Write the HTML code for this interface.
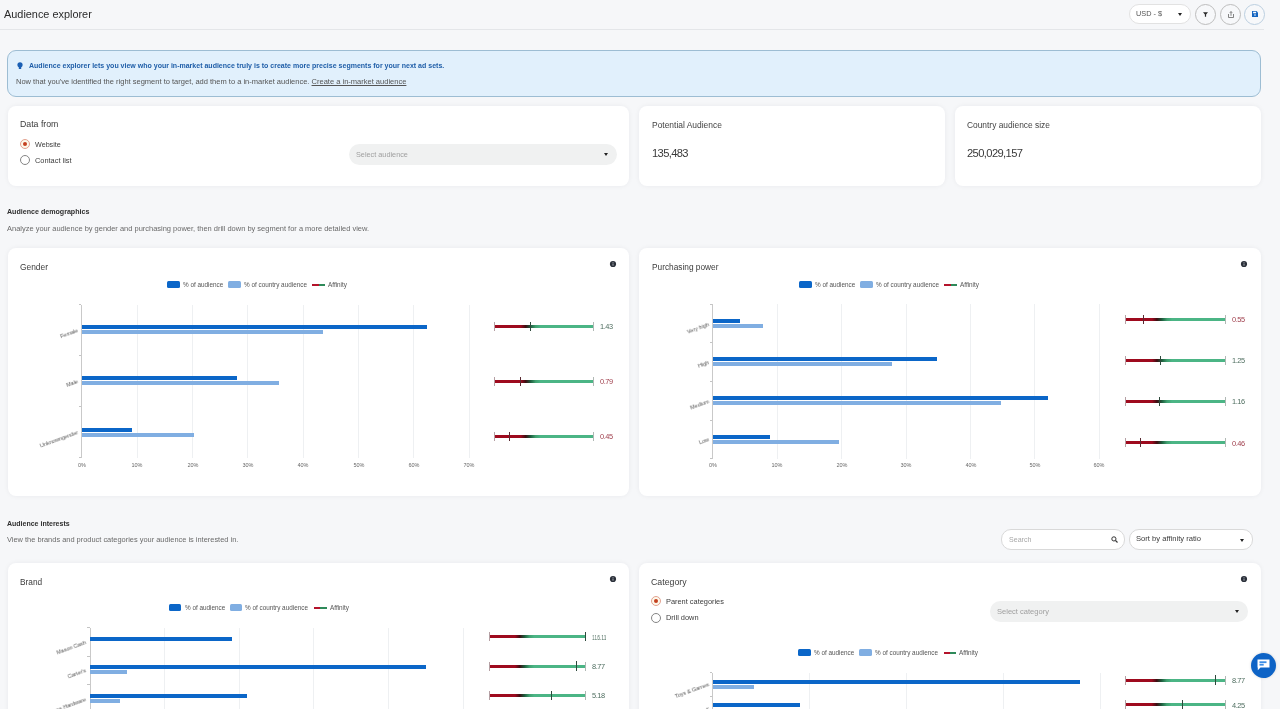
<!DOCTYPE html><html><head><meta charset="utf-8"><style>
*{margin:0;padding:0;box-sizing:border-box}
html,body{width:1280px;height:709px;overflow:hidden;background:#f6f7f9;font-family:"Liberation Sans", sans-serif}
.t{position:absolute;white-space:nowrap;line-height:1;will-change:transform}
.r{position:absolute}
.card{position:absolute;background:#fff;border-radius:8px;box-shadow:0 0 5px rgba(20,30,50,0.06)}
</style></head><body>
<div class="t" style="left:3.5px;top:8.57px;font-size:10.9px;color:#2b2b2b;font-weight:400;">Audience explorer</div>
<div class="r" style="left:0px;top:29px;width:1264px;height:1px;background:#e4e6e9;"></div>
<div class="r" style="left:1129px;top:4px;width:62px;height:20px;border:1px solid #e2e2e2;border-radius:10px;background:#fff"></div>
<div class="t" style="left:1136px;top:10.32px;font-size:7.3px;color:#555;font-weight:400;">USD - $</div>
<div class="r" style="left:1178px;top:12.5px;width:0;height:0;border-left:2.5px solid transparent;border-right:2.5px solid transparent;border-top:3px solid #222"></div>
<div class="r" style="left:1195.0px;top:3.5px;width:21px;height:21px;border:1px solid #bdbdbd;border-radius:50%;background:#f7f8fa"></div>
<div class="r" style="left:1220.0px;top:3.5px;width:21px;height:21px;border:1px solid #bdbdbd;border-radius:50%;background:#f7f8fa"></div>
<div class="r" style="left:1244.0px;top:3.5px;width:21px;height:21px;border:1px solid #bccfe0;border-radius:50%;background:#f7f8fa"></div>
<svg class="r" style="left:1203px;top:11.5px" width="5" height="5" viewBox="0 0 5 5"><path d="M0 0.2 H5 L3.1 2.4 V4.8 H1.9 V2.4 Z" fill="#2a2a2a"/></svg>
<svg class="r" style="left:1227.5px;top:10.5px" width="6" height="7" viewBox="0 0 6 7"><path d="M0.5 3 V6.5 H5.5 V3" fill="none" stroke="#666" stroke-width="0.8"/><path d="M3 4.8 V0.6 M1.8 1.8 L3 0.6 L4.2 1.8" fill="none" stroke="#666" stroke-width="0.8"/></svg>
<svg class="r" style="left:1251.5px;top:11px" width="6" height="6" viewBox="0 0 8 8"><path d="M0 0 H6 L8 2 V8 H0 Z" fill="#1565c0"/><rect x="1.5" y="1" width="4" height="2" fill="#fff"/><circle cx="4" cy="5.3" r="1.1" fill="#fff"/></svg>
<div class="r" style="left:7px;top:50px;width:1254px;height:46.5px;background:#e1f0fc;border:1px solid #9dbdd3;border-radius:9px"></div>
<svg class="r" style="left:17px;top:62px" width="6" height="8" viewBox="0 0 6 8"><circle cx="3" cy="2.8" r="2.6" fill="#1a5fb4"/><rect x="1.8" y="5" width="2.4" height="2" fill="#1a5fb4"/></svg>
<div class="t" style="left:29px;top:62.25px;font-size:7.03px;color:#1f5ea8;font-weight:700;">Audience explorer lets you view who your in-market audience truly is to create more precise segments for your next ad sets.</div>
<div class="t" style="left:16px;top:78.43px;font-size:7.53px;color:#555;font-weight:400;">Now that you&#39;ve identified the right segment to target, add them to a in-market audience. <span style="text-decoration:underline">Create a in-market audience</span></div>
<div class="card" style="left:8px;top:106px;width:621px;height:79.5px"></div>
<div class="card" style="left:639px;top:106px;width:306px;height:79.5px"></div>
<div class="card" style="left:955px;top:106px;width:305.5px;height:79.5px"></div>
<div class="t" style="left:20px;top:119.89px;font-size:8.75px;color:#3c3c3c;font-weight:400;">Data from</div>
<div class="r" style="left:20px;top:138.8px;width:10px;height:10px;border:1px solid #e3a290;border-radius:50%;background:#fdf8ea"></div>
<div class="r" style="left:23px;top:141.8px;width:4px;height:4px;border-radius:50%;background:#c4401f"></div>
<div class="r" style="left:20px;top:155.3px;width:10px;height:10px;border:1px solid #858585;border-radius:50%;background:#fff"></div>
<div class="t" style="left:34.5px;top:141.92px;font-size:7.18px;color:#3c3c3c;font-weight:400;">Website</div>
<div class="t" style="left:34.5px;top:157.04px;font-size:7.4px;color:#3c3c3c;font-weight:400;">Contact list</div>
<div class="r" style="left:348.5px;top:144.2px;width:268.5px;height:20.8px;background:#f0f1f1;border-radius:10.4px"></div>
<div class="t" style="left:355.5px;top:150.91px;font-size:7.31px;color:#a0a0a0;font-weight:400;">Select audience</div>
<div class="r" style="left:603.5px;top:153px;width:0;height:0;border-left:2.5px solid transparent;border-right:2.5px solid transparent;border-top:3px solid #222"></div>
<div class="t" style="left:651.6px;top:120.75px;font-size:8.45px;color:#444;font-weight:400;">Potential Audience</div>
<div class="t" style="left:651.6px;top:147.82px;font-size:11.2px;color:#3a3a3a;font-weight:400;letter-spacing:-0.65px">135,483</div>
<div class="t" style="left:966.8px;top:120.80px;font-size:8.39px;color:#444;font-weight:400;">Country audience size</div>
<div class="t" style="left:966.8px;top:147.82px;font-size:11.2px;color:#3a3a3a;font-weight:400;letter-spacing:-0.62px">250,029,157</div>
<div class="t" style="left:7.3px;top:209.19px;font-size:7.1px;color:#2f2f2f;font-weight:700;">Audience demographics</div>
<div class="t" style="left:7.3px;top:225.07px;font-size:7.48px;color:#6a6a6a;font-weight:400;">Analyze your audience by gender and purchasing power, then drill down by segment for a more detailed view.</div>
<div class="card" style="left:8px;top:248px;width:621px;height:247.5px"></div>
<div class="t" style="left:19.7px;top:262.80px;font-size:8.39px;color:#3c3c3c;font-weight:400;">Gender</div>
<svg class="r" style="left:608.8px;top:260.1px" width="8" height="8" viewBox="0 0 8 8"><circle cx="4" cy="4" r="3.1" fill="#2b303a"/><rect x="3.6" y="3.5" width="0.8" height="2.2" fill="#c3c7ce"/><rect x="3.6" y="2.2" width="0.8" height="0.8" fill="#c3c7ce"/></svg>
<div class="r" style="left:167px;top:281.3px;width:12.8px;height:6.3px;background:#0b66c8;border-radius:1.5px"></div>
<div class="t" style="left:183px;top:281.51px;font-size:6.37px;color:#555;font-weight:400;">% of audience</div>
<div class="r" style="left:228px;top:281.3px;width:12.8px;height:6.3px;background:#80aee2;border-radius:1.5px"></div>
<div class="t" style="left:243.6px;top:281.51px;font-size:6.37px;color:#555;font-weight:400;">% of country audience</div>
<div class="r" style="left:312.3px;top:283.6px;width:6.3px;height:2px;background:#b4132b;"></div>
<div class="r" style="left:318.6px;top:283.6px;width:6.3px;height:2px;background:#2f8a5a;"></div>
<div class="t" style="left:328px;top:281.51px;font-size:6.37px;color:#555;font-weight:400;">Affinity</div>
<div class="r" style="left:136.65px;top:304.6px;width:1px;height:153.29999999999995px;background:#eef0f2;"></div>
<div class="r" style="left:192.0px;top:304.6px;width:1px;height:153.29999999999995px;background:#eef0f2;"></div>
<div class="r" style="left:247.35000000000002px;top:304.6px;width:1px;height:153.29999999999995px;background:#eef0f2;"></div>
<div class="r" style="left:302.7px;top:304.6px;width:1px;height:153.29999999999995px;background:#eef0f2;"></div>
<div class="r" style="left:358.05px;top:304.6px;width:1px;height:153.29999999999995px;background:#eef0f2;"></div>
<div class="r" style="left:413.40000000000003px;top:304.6px;width:1px;height:153.29999999999995px;background:#eef0f2;"></div>
<div class="r" style="left:468.75px;top:304.6px;width:1px;height:153.29999999999995px;background:#eef0f2;"></div>
<div class="r" style="left:81.3px;top:304.6px;width:1px;height:153.79999999999995px;background:#c9c9c9;"></div>
<div class="r" style="left:78.8px;top:304.1px;width:2.5px;height:1px;background:#c4c4c4;"></div>
<div class="r" style="left:78.8px;top:355.2px;width:2.5px;height:1px;background:#c4c4c4;"></div>
<div class="r" style="left:78.8px;top:406.3px;width:2.5px;height:1px;background:#c4c4c4;"></div>
<div class="r" style="left:78.8px;top:457.4px;width:2.5px;height:1px;background:#c4c4c4;"></div>
<div class="r" style="left:81.8px;top:325px;width:345.7px;height:4px;background:#0b66c8;"></div>
<div class="r" style="left:81.8px;top:330px;width:241.7px;height:4px;background:#80aee2;"></div>
<div class="t" style="left:77.8px;top:328.15000000000003px;font-size:5.5px;color:#555;transform:translateX(-100%) rotate(-20deg);transform-origin:100% 50%">Female</div>
<div class="r" style="left:81.8px;top:376px;width:155.5px;height:4px;background:#0b66c8;"></div>
<div class="r" style="left:81.8px;top:381px;width:197.7px;height:4px;background:#80aee2;"></div>
<div class="t" style="left:77.8px;top:379.25px;font-size:5.5px;color:#555;transform:translateX(-100%) rotate(-20deg);transform-origin:100% 50%">Male</div>
<div class="r" style="left:81.8px;top:428px;width:50.39999999999999px;height:4px;background:#0b66c8;"></div>
<div class="r" style="left:81.8px;top:433px;width:112.00000000000001px;height:4px;background:#80aee2;"></div>
<div class="t" style="left:77.8px;top:430.35px;font-size:5.5px;color:#555;transform:translateX(-100%) rotate(-20deg);transform-origin:100% 50%">Unknowngender</div>
<div class="t" style="left:81.8px;top:463.2px;font-size:5.5px;color:#666;transform:translateX(-50%)">0%</div>
<div class="t" style="left:137.15px;top:463.2px;font-size:5.5px;color:#666;transform:translateX(-50%)">10%</div>
<div class="t" style="left:192.5px;top:463.2px;font-size:5.5px;color:#666;transform:translateX(-50%)">20%</div>
<div class="t" style="left:247.85000000000002px;top:463.2px;font-size:5.5px;color:#666;transform:translateX(-50%)">30%</div>
<div class="t" style="left:303.2px;top:463.2px;font-size:5.5px;color:#666;transform:translateX(-50%)">40%</div>
<div class="t" style="left:358.55px;top:463.2px;font-size:5.5px;color:#666;transform:translateX(-50%)">50%</div>
<div class="t" style="left:413.90000000000003px;top:463.2px;font-size:5.5px;color:#666;transform:translateX(-50%)">60%</div>
<div class="t" style="left:469.25px;top:463.2px;font-size:5.5px;color:#666;transform:translateX(-50%)">70%</div>
<div class="r" style="left:494.6px;top:325px;width:99.19999999999993px;height:3px;background:linear-gradient(90deg,#a00a1e 0%,#9c0a1e 26%,#3c0e12 31%,#1d5e3e 36%,#3fa070 41%,#4bb585 46%,#4bb585 100%)"></div>
<div class="r" style="left:494.1px;top:321.7px;width:1px;height:9px;background:#b5a0a4;"></div>
<div class="r" style="left:593.3px;top:321.7px;width:1px;height:9px;background:#b0b8b4;"></div>
<div class="r" style="left:529.9px;top:321.5px;width:1.1px;height:9.4px;background:#2e4a3c;"></div>
<div class="t" style="left:600.4px;top:323.04px;font-size:7.4px;color:#4f6e60;font-weight:400;letter-spacing:-0.45px">1.43</div>
<div class="r" style="left:494.6px;top:380px;width:99.19999999999993px;height:3px;background:linear-gradient(90deg,#a00a1e 0%,#9c0a1e 26%,#3c0e12 31%,#1d5e3e 36%,#3fa070 41%,#4bb585 46%,#4bb585 100%)"></div>
<div class="r" style="left:494.1px;top:376.8px;width:1px;height:9px;background:#b5a0a4;"></div>
<div class="r" style="left:593.3px;top:376.8px;width:1px;height:9px;background:#b0b8b4;"></div>
<div class="r" style="left:520.1px;top:376.6px;width:1.1px;height:9.4px;background:#5a2a32;"></div>
<div class="t" style="left:600.4px;top:378.14px;font-size:7.4px;color:#a0404e;font-weight:400;letter-spacing:-0.45px">0.79</div>
<div class="r" style="left:494.6px;top:435px;width:99.19999999999993px;height:3px;background:linear-gradient(90deg,#a00a1e 0%,#9c0a1e 26%,#3c0e12 31%,#1d5e3e 36%,#3fa070 41%,#4bb585 46%,#4bb585 100%)"></div>
<div class="r" style="left:494.1px;top:431.7px;width:1px;height:9px;background:#b5a0a4;"></div>
<div class="r" style="left:593.3px;top:431.7px;width:1px;height:9px;background:#b0b8b4;"></div>
<div class="r" style="left:508.7px;top:431.5px;width:1.1px;height:9.4px;background:#5a2a32;"></div>
<div class="t" style="left:600.4px;top:433.04px;font-size:7.4px;color:#a0404e;font-weight:400;letter-spacing:-0.45px">0.45</div>
<div class="card" style="left:639px;top:248px;width:621.5px;height:247.5px"></div>
<div class="t" style="left:651.6px;top:262.67px;font-size:8.3px;color:#3c3c3c;font-weight:400;">Purchasing power</div>
<svg class="r" style="left:1240px;top:260.1px" width="8" height="8" viewBox="0 0 8 8"><circle cx="4" cy="4" r="3.1" fill="#2b303a"/><rect x="3.6" y="3.5" width="0.8" height="2.2" fill="#c3c7ce"/><rect x="3.6" y="2.2" width="0.8" height="0.8" fill="#c3c7ce"/></svg>
<div class="r" style="left:799px;top:281.3px;width:12.8px;height:6.3px;background:#0b66c8;border-radius:1.5px"></div>
<div class="t" style="left:815px;top:281.51px;font-size:6.37px;color:#555;font-weight:400;">% of audience</div>
<div class="r" style="left:860px;top:281.3px;width:12.8px;height:6.3px;background:#80aee2;border-radius:1.5px"></div>
<div class="t" style="left:875.6px;top:281.51px;font-size:6.37px;color:#555;font-weight:400;">% of country audience</div>
<div class="r" style="left:944.3px;top:283.6px;width:6.3px;height:2px;background:#b4132b;"></div>
<div class="r" style="left:950.6px;top:283.6px;width:6.3px;height:2px;background:#2f8a5a;"></div>
<div class="t" style="left:960px;top:281.51px;font-size:6.37px;color:#555;font-weight:400;">Affinity</div>
<div class="r" style="left:776.73px;top:304.3px;width:1px;height:154.3px;background:#eef0f2;"></div>
<div class="r" style="left:841.16px;top:304.3px;width:1px;height:154.3px;background:#eef0f2;"></div>
<div class="r" style="left:905.5899999999999px;top:304.3px;width:1px;height:154.3px;background:#eef0f2;"></div>
<div class="r" style="left:970.02px;top:304.3px;width:1px;height:154.3px;background:#eef0f2;"></div>
<div class="r" style="left:1034.45px;top:304.3px;width:1px;height:154.3px;background:#eef0f2;"></div>
<div class="r" style="left:1098.88px;top:304.3px;width:1px;height:154.3px;background:#eef0f2;"></div>
<div class="r" style="left:712.3px;top:304.3px;width:1px;height:154.8px;background:#c9c9c9;"></div>
<div class="r" style="left:709.8px;top:303.8px;width:2.5px;height:1px;background:#c4c4c4;"></div>
<div class="r" style="left:709.8px;top:342.375px;width:2.5px;height:1px;background:#c4c4c4;"></div>
<div class="r" style="left:709.8px;top:380.95000000000005px;width:2.5px;height:1px;background:#c4c4c4;"></div>
<div class="r" style="left:709.8px;top:419.52500000000003px;width:2.5px;height:1px;background:#c4c4c4;"></div>
<div class="r" style="left:709.8px;top:458.1px;width:2.5px;height:1px;background:#c4c4c4;"></div>
<div class="r" style="left:712.8px;top:319px;width:27.300000000000068px;height:4px;background:#0b66c8;"></div>
<div class="r" style="left:712.8px;top:324px;width:50.200000000000045px;height:4px;background:#80aee2;"></div>
<div class="t" style="left:708.8px;top:321.58750000000003px;font-size:5.5px;color:#555;transform:translateX(-100%) rotate(-20deg);transform-origin:100% 50%">Very high</div>
<div class="r" style="left:712.8px;top:357px;width:224.20000000000005px;height:4px;background:#0b66c8;"></div>
<div class="r" style="left:712.8px;top:362px;width:179.60000000000002px;height:4px;background:#80aee2;"></div>
<div class="t" style="left:708.8px;top:360.1625px;font-size:5.5px;color:#555;transform:translateX(-100%) rotate(-20deg);transform-origin:100% 50%">High</div>
<div class="r" style="left:712.8px;top:396px;width:335.4000000000001px;height:4px;background:#0b66c8;"></div>
<div class="r" style="left:712.8px;top:401px;width:288.20000000000005px;height:4px;background:#80aee2;"></div>
<div class="t" style="left:708.8px;top:398.7375px;font-size:5.5px;color:#555;transform:translateX(-100%) rotate(-20deg);transform-origin:100% 50%">Medium</div>
<div class="r" style="left:712.8px;top:435px;width:57.200000000000045px;height:4px;background:#0b66c8;"></div>
<div class="r" style="left:712.8px;top:440px;width:126.0px;height:4px;background:#80aee2;"></div>
<div class="t" style="left:708.8px;top:437.3125px;font-size:5.5px;color:#555;transform:translateX(-100%) rotate(-20deg);transform-origin:100% 50%">Low</div>
<div class="t" style="left:712.8px;top:463px;font-size:5.5px;color:#666;transform:translateX(-50%)">0%</div>
<div class="t" style="left:777.23px;top:463px;font-size:5.5px;color:#666;transform:translateX(-50%)">10%</div>
<div class="t" style="left:841.66px;top:463px;font-size:5.5px;color:#666;transform:translateX(-50%)">20%</div>
<div class="t" style="left:906.0899999999999px;top:463px;font-size:5.5px;color:#666;transform:translateX(-50%)">30%</div>
<div class="t" style="left:970.52px;top:463px;font-size:5.5px;color:#666;transform:translateX(-50%)">40%</div>
<div class="t" style="left:1034.95px;top:463px;font-size:5.5px;color:#666;transform:translateX(-50%)">50%</div>
<div class="t" style="left:1099.38px;top:463px;font-size:5.5px;color:#666;transform:translateX(-50%)">60%</div>
<div class="r" style="left:1125.8px;top:318px;width:99.79999999999995px;height:3px;background:linear-gradient(90deg,#a00a1e 0%,#9c0a1e 26%,#3c0e12 31%,#1d5e3e 36%,#3fa070 41%,#4bb585 46%,#4bb585 100%)"></div>
<div class="r" style="left:1125.3px;top:315.1px;width:1px;height:9px;background:#b5a0a4;"></div>
<div class="r" style="left:1225.1px;top:315.1px;width:1px;height:9px;background:#b0b8b4;"></div>
<div class="r" style="left:1143.4px;top:314.90000000000003px;width:1.1px;height:9.4px;background:#5a2a32;"></div>
<div class="t" style="left:1232.1999999999998px;top:316.44px;font-size:7.4px;color:#a0404e;font-weight:400;letter-spacing:-0.45px">0.55</div>
<div class="r" style="left:1125.8px;top:359px;width:99.79999999999995px;height:3px;background:linear-gradient(90deg,#a00a1e 0%,#9c0a1e 26%,#3c0e12 31%,#1d5e3e 36%,#3fa070 41%,#4bb585 46%,#4bb585 100%)"></div>
<div class="r" style="left:1125.3px;top:356.0px;width:1px;height:9px;background:#b5a0a4;"></div>
<div class="r" style="left:1225.1px;top:356.0px;width:1px;height:9px;background:#b0b8b4;"></div>
<div class="r" style="left:1160.3px;top:355.8px;width:1.1px;height:9.4px;background:#2e4a3c;"></div>
<div class="t" style="left:1232.1999999999998px;top:357.34px;font-size:7.4px;color:#4f6e60;font-weight:400;letter-spacing:-0.45px">1.25</div>
<div class="r" style="left:1125.8px;top:400px;width:99.79999999999995px;height:3px;background:linear-gradient(90deg,#a00a1e 0%,#9c0a1e 26%,#3c0e12 31%,#1d5e3e 36%,#3fa070 41%,#4bb585 46%,#4bb585 100%)"></div>
<div class="r" style="left:1125.3px;top:397.1px;width:1px;height:9px;background:#b5a0a4;"></div>
<div class="r" style="left:1225.1px;top:397.1px;width:1px;height:9px;background:#b0b8b4;"></div>
<div class="r" style="left:1159.2px;top:396.90000000000003px;width:1.1px;height:9.4px;background:#2e4a3c;"></div>
<div class="t" style="left:1232.1999999999998px;top:398.44px;font-size:7.4px;color:#4f6e60;font-weight:400;letter-spacing:-0.45px">1.16</div>
<div class="r" style="left:1125.8px;top:441px;width:99.79999999999995px;height:3px;background:linear-gradient(90deg,#a00a1e 0%,#9c0a1e 26%,#3c0e12 31%,#1d5e3e 36%,#3fa070 41%,#4bb585 46%,#4bb585 100%)"></div>
<div class="r" style="left:1125.3px;top:438.2px;width:1px;height:9px;background:#b5a0a4;"></div>
<div class="r" style="left:1225.1px;top:438.2px;width:1px;height:9px;background:#b0b8b4;"></div>
<div class="r" style="left:1140.4px;top:438.0px;width:1.1px;height:9.4px;background:#5a2a32;"></div>
<div class="t" style="left:1232.1999999999998px;top:439.54px;font-size:7.4px;color:#a0404e;font-weight:400;letter-spacing:-0.45px">0.46</div>
<div class="t" style="left:7.3px;top:519.87px;font-size:7.01px;color:#2f2f2f;font-weight:700;">Audience interests</div>
<div class="t" style="left:7.3px;top:535.61px;font-size:7.43px;color:#6a6a6a;font-weight:400;">View the brands and product categories your audience is interested in.</div>
<div class="r" style="left:1001px;top:529px;width:124px;height:20.5px;border:1px solid #d9d9d9;border-radius:10px;background:#fff"></div>
<div class="t" style="left:1008.6px;top:536.02px;font-size:7.07px;color:#a8a8a8;font-weight:400;">Search</div>
<svg class="r" style="left:1110.5px;top:535.5px" width="7" height="7" viewBox="0 0 7 7"><circle cx="2.9" cy="2.9" r="2.1" fill="none" stroke="#333" stroke-width="1"/><path d="M4.5 4.5 L6.5 6.5" stroke="#333" stroke-width="1.1"/></svg>
<div class="r" style="left:1129px;top:529px;width:124px;height:20.5px;border:1px solid #d9d9d9;border-radius:10px;background:#fff"></div>
<div class="t" style="left:1136.2px;top:535.36px;font-size:7.61px;color:#3c3c3c;font-weight:400;">Sort by affinity ratio</div>
<div class="r" style="left:1239.5px;top:538.5px;width:0;height:0;border-left:2.5px solid transparent;border-right:2.5px solid transparent;border-top:3px solid #222"></div>
<div class="card" style="left:8px;top:562.5px;width:621px;height:160px"></div>
<div class="t" style="left:20px;top:578.16px;font-size:8.32px;color:#3c3c3c;font-weight:400;">Brand</div>
<svg class="r" style="left:608.7px;top:575.3px" width="8" height="8" viewBox="0 0 8 8"><circle cx="4" cy="4" r="3.1" fill="#2b303a"/><rect x="3.6" y="3.5" width="0.8" height="2.2" fill="#c3c7ce"/><rect x="3.6" y="2.2" width="0.8" height="0.8" fill="#c3c7ce"/></svg>
<div class="r" style="left:168.7px;top:604.4px;width:12.8px;height:6.3px;background:#0b66c8;border-radius:1.5px"></div>
<div class="t" style="left:184.7px;top:604.61px;font-size:6.37px;color:#555;font-weight:400;">% of audience</div>
<div class="r" style="left:229.7px;top:604.4px;width:12.8px;height:6.3px;background:#80aee2;border-radius:1.5px"></div>
<div class="t" style="left:245.29999999999998px;top:604.61px;font-size:6.37px;color:#555;font-weight:400;">% of country audience</div>
<div class="r" style="left:314.0px;top:606.7px;width:6.3px;height:2px;background:#b4132b;"></div>
<div class="r" style="left:320.29999999999995px;top:606.7px;width:6.3px;height:2px;background:#2f8a5a;"></div>
<div class="t" style="left:329.7px;top:604.61px;font-size:6.37px;color:#555;font-weight:400;">Affinity</div>
<div class="r" style="left:164.1px;top:627.5px;width:1px;height:114.0px;background:#eef0f2;"></div>
<div class="r" style="left:238.7px;top:627.5px;width:1px;height:114.0px;background:#eef0f2;"></div>
<div class="r" style="left:313.29999999999995px;top:627.5px;width:1px;height:114.0px;background:#eef0f2;"></div>
<div class="r" style="left:387.9px;top:627.5px;width:1px;height:114.0px;background:#eef0f2;"></div>
<div class="r" style="left:462.5px;top:627.5px;width:1px;height:114.0px;background:#eef0f2;"></div>
<div class="r" style="left:89.5px;top:627.5px;width:1px;height:114.5px;background:#c9c9c9;"></div>
<div class="r" style="left:87px;top:627.0px;width:2.5px;height:1px;background:#c4c4c4;"></div>
<div class="r" style="left:87px;top:655.5px;width:2.5px;height:1px;background:#c4c4c4;"></div>
<div class="r" style="left:87px;top:684.0px;width:2.5px;height:1px;background:#c4c4c4;"></div>
<div class="r" style="left:87px;top:712.5px;width:2.5px;height:1px;background:#c4c4c4;"></div>
<div class="r" style="left:87px;top:741.0px;width:2.5px;height:1px;background:#c4c4c4;"></div>
<div class="r" style="left:90px;top:637px;width:141.75px;height:4px;background:#0b66c8;"></div>
<div class="t" style="left:86px;top:639.75px;font-size:5.5px;color:#555;transform:translateX(-100%) rotate(-20deg);transform-origin:100% 50%">Mason Cash</div>
<div class="r" style="left:90px;top:665px;width:335.5px;height:4px;background:#0b66c8;"></div>
<div class="r" style="left:90px;top:670px;width:37px;height:4px;background:#80aee2;"></div>
<div class="t" style="left:86px;top:668.25px;font-size:5.5px;color:#555;transform:translateX(-100%) rotate(-20deg);transform-origin:100% 50%">Carter&#39;s</div>
<div class="r" style="left:90px;top:694px;width:156.75px;height:4px;background:#0b66c8;"></div>
<div class="r" style="left:90px;top:699px;width:29.5px;height:4px;background:#80aee2;"></div>
<div class="t" style="left:86px;top:696.75px;font-size:5.5px;color:#555;transform:translateX(-100%) rotate(-20deg);transform-origin:100% 50%">Home Hardware</div>
<div class="t" style="left:86px;top:725.25px;font-size:5.5px;color:#555;transform:translateX(-100%) rotate(-20deg);transform-origin:100% 50%">x</div>
<div class="r" style="left:489.8px;top:635px;width:95.80000000000001px;height:3px;background:linear-gradient(90deg,#a00a1e 0%,#9c0a1e 26%,#3c0e12 31%,#1d5e3e 36%,#3fa070 41%,#4bb585 46%,#4bb585 100%)"></div>
<div class="r" style="left:489.3px;top:632.2px;width:1px;height:9px;background:#b5a0a4;"></div>
<div class="r" style="left:585.1px;top:632.2px;width:1px;height:9px;background:#b0b8b4;"></div>
<div class="r" style="left:585.1px;top:632.0px;width:1.1px;height:9.4px;background:#2e4a3c;"></div>
<div class="t" style="left:592.2px;top:633.71px;font-size:7.2px;color:#4f6e60;font-weight:400;letter-spacing:0px;transform:scaleX(0.69);transform-origin:0 0">116.11</div>
<div class="r" style="left:489.8px;top:665px;width:95.80000000000001px;height:3px;background:linear-gradient(90deg,#a00a1e 0%,#9c0a1e 26%,#3c0e12 31%,#1d5e3e 36%,#3fa070 41%,#4bb585 46%,#4bb585 100%)"></div>
<div class="r" style="left:489.3px;top:661.6px;width:1px;height:9px;background:#b5a0a4;"></div>
<div class="r" style="left:585.1px;top:661.6px;width:1px;height:9px;background:#b0b8b4;"></div>
<div class="r" style="left:576.1px;top:661.4px;width:1.1px;height:9.4px;background:#2e4a3c;"></div>
<div class="t" style="left:592.2px;top:662.94px;font-size:7.4px;color:#4f6e60;font-weight:400;letter-spacing:-0.45px">8.77</div>
<div class="r" style="left:489.8px;top:694px;width:95.80000000000001px;height:3px;background:linear-gradient(90deg,#a00a1e 0%,#9c0a1e 26%,#3c0e12 31%,#1d5e3e 36%,#3fa070 41%,#4bb585 46%,#4bb585 100%)"></div>
<div class="r" style="left:489.3px;top:691.0px;width:1px;height:9px;background:#b5a0a4;"></div>
<div class="r" style="left:585.1px;top:691.0px;width:1px;height:9px;background:#b0b8b4;"></div>
<div class="r" style="left:550.8px;top:690.8px;width:1.1px;height:9.4px;background:#2e4a3c;"></div>
<div class="t" style="left:592.2px;top:692.34px;font-size:7.4px;color:#4f6e60;font-weight:400;letter-spacing:-0.45px">5.18</div>
<div class="card" style="left:639px;top:562.5px;width:621.5px;height:160px"></div>
<div class="t" style="left:651.25px;top:577.58px;font-size:8.77px;color:#3c3c3c;font-weight:400;">Category</div>
<svg class="r" style="left:1240px;top:575.3px" width="8" height="8" viewBox="0 0 8 8"><circle cx="4" cy="4" r="3.1" fill="#2b303a"/><rect x="3.6" y="3.5" width="0.8" height="2.2" fill="#c3c7ce"/><rect x="3.6" y="2.2" width="0.8" height="0.8" fill="#c3c7ce"/></svg>
<div class="r" style="left:650.9px;top:596.3px;width:10px;height:10px;border:1px solid #e3a290;border-radius:50%;background:#fdf8ea"></div>
<div class="r" style="left:653.9px;top:599.3px;width:4px;height:4px;border-radius:50%;background:#c4401f"></div>
<div class="r" style="left:650.9px;top:612.9px;width:10px;height:10px;border:1px solid #858585;border-radius:50%;background:#fff"></div>
<div class="t" style="left:665.9px;top:597.74px;font-size:7.4px;color:#3c3c3c;font-weight:400;">Parent categories</div>
<div class="t" style="left:665.9px;top:614.31px;font-size:7.43px;color:#3c3c3c;font-weight:400;">Drill down</div>
<div class="r" style="left:990px;top:601.3px;width:257.5px;height:20.6px;background:#f0f1f1;border-radius:10.3px"></div>
<div class="t" style="left:997px;top:607.82px;font-size:7.54px;color:#a0a0a0;font-weight:400;">Select category</div>
<div class="r" style="left:1234.5px;top:610px;width:0;height:0;border-left:2.5px solid transparent;border-right:2.5px solid transparent;border-top:3px solid #222"></div>
<div class="r" style="left:798.3px;top:649.4px;width:12.8px;height:6.3px;background:#0b66c8;border-radius:1.5px"></div>
<div class="t" style="left:814.3px;top:649.61px;font-size:6.37px;color:#555;font-weight:400;">% of audience</div>
<div class="r" style="left:859.3px;top:649.4px;width:12.8px;height:6.3px;background:#80aee2;border-radius:1.5px"></div>
<div class="t" style="left:874.9px;top:649.61px;font-size:6.37px;color:#555;font-weight:400;">% of country audience</div>
<div class="r" style="left:943.5999999999999px;top:651.7px;width:6.3px;height:2px;background:#b4132b;"></div>
<div class="r" style="left:949.9px;top:651.7px;width:6.3px;height:2px;background:#2f8a5a;"></div>
<div class="t" style="left:959.3px;top:649.61px;font-size:6.37px;color:#555;font-weight:400;">Affinity</div>
<div class="r" style="left:809.0999999999999px;top:672.5px;width:1px;height:95.0px;background:#eef0f2;"></div>
<div class="r" style="left:905.9px;top:672.5px;width:1px;height:95.0px;background:#eef0f2;"></div>
<div class="r" style="left:1002.6999999999999px;top:672.5px;width:1px;height:95.0px;background:#eef0f2;"></div>
<div class="r" style="left:1099.5px;top:672.5px;width:1px;height:95.0px;background:#eef0f2;"></div>
<div class="r" style="left:712.3px;top:672.5px;width:1px;height:95.5px;background:#c9c9c9;"></div>
<div class="r" style="left:709.8px;top:672.0px;width:2.5px;height:1px;background:#c4c4c4;"></div>
<div class="r" style="left:709.8px;top:695.75px;width:2.5px;height:1px;background:#c4c4c4;"></div>
<div class="r" style="left:709.8px;top:719.5px;width:2.5px;height:1px;background:#c4c4c4;"></div>
<div class="r" style="left:709.8px;top:743.25px;width:2.5px;height:1px;background:#c4c4c4;"></div>
<div class="r" style="left:709.8px;top:767.0px;width:2.5px;height:1px;background:#c4c4c4;"></div>
<div class="r" style="left:712.8px;top:680px;width:367.20000000000005px;height:4px;background:#0b66c8;"></div>
<div class="r" style="left:712.8px;top:685px;width:41.700000000000045px;height:4px;background:#80aee2;"></div>
<div class="t" style="left:708.8px;top:682.375px;font-size:5.5px;color:#555;transform:translateX(-100%) rotate(-20deg);transform-origin:100% 50%">Toys &amp; Games</div>
<div class="r" style="left:712.8px;top:703px;width:87.20000000000005px;height:4px;background:#0b66c8;"></div>
<div class="t" style="left:708.8px;top:706.125px;font-size:5.5px;color:#555;transform:translateX(-100%) rotate(-20deg);transform-origin:100% 50%">x</div>
<div class="t" style="left:708.8px;top:729.875px;font-size:5.5px;color:#555;transform:translateX(-100%) rotate(-20deg);transform-origin:100% 50%">y</div>
<div class="t" style="left:708.8px;top:753.625px;font-size:5.5px;color:#555;transform:translateX(-100%) rotate(-20deg);transform-origin:100% 50%">z</div>
<div class="r" style="left:1125.7px;top:679px;width:99.5px;height:3px;background:linear-gradient(90deg,#a00a1e 0%,#9c0a1e 26%,#3c0e12 31%,#1d5e3e 36%,#3fa070 41%,#4bb585 46%,#4bb585 100%)"></div>
<div class="r" style="left:1125.2px;top:675.5px;width:1px;height:9px;background:#b5a0a4;"></div>
<div class="r" style="left:1224.7px;top:675.5px;width:1px;height:9px;background:#b0b8b4;"></div>
<div class="r" style="left:1215.1px;top:675.3px;width:1.1px;height:9.4px;background:#2e4a3c;"></div>
<div class="t" style="left:1231.8px;top:676.84px;font-size:7.4px;color:#4f6e60;font-weight:400;letter-spacing:-0.45px">8.77</div>
<div class="r" style="left:1125.7px;top:703px;width:99.5px;height:3px;background:linear-gradient(90deg,#a00a1e 0%,#9c0a1e 26%,#3c0e12 31%,#1d5e3e 36%,#3fa070 41%,#4bb585 46%,#4bb585 100%)"></div>
<div class="r" style="left:1125.2px;top:700.2px;width:1px;height:9px;background:#b5a0a4;"></div>
<div class="r" style="left:1224.7px;top:700.2px;width:1px;height:9px;background:#b0b8b4;"></div>
<div class="r" style="left:1182.1px;top:700.0px;width:1.1px;height:9.4px;background:#2e4a3c;"></div>
<div class="t" style="left:1231.8px;top:701.54px;font-size:7.4px;color:#4f6e60;font-weight:400;letter-spacing:-0.45px">4.25</div>
<div class="r" style="left:1250.7px;top:652.5px;width:25px;height:25px;border-radius:50%;background:#0d63c6;box-shadow:0 0 3px rgba(0,0,0,0.15)"></div>
<svg class="r" style="left:1257px;top:659px" width="13" height="12" viewBox="0 0 13 12"><path d="M0.5 0.5 H12.5 V8.5 H3.5 L0.8 11.2 V8.5 H0.5 Z" fill="#fff"/><rect x="2.5" y="2.3" width="7" height="1.8" fill="#3d8ee6"/><rect x="2.5" y="4.8" width="4.2" height="1.8" fill="#3d8ee6"/></svg>
</body></html>
